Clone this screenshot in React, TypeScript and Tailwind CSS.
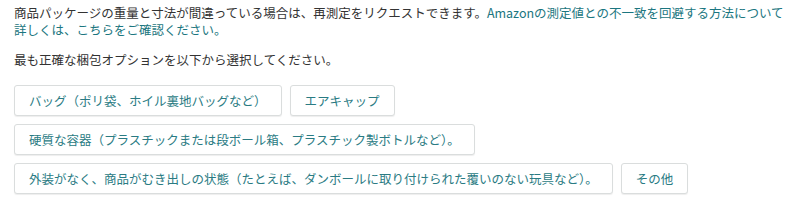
const options = [
  ['バッグ（ポリ袋、ホイル裏地バッグなど）', 'エアキャップ'],
  ['硬質な容器（プラスチックまたは段ボール箱、プラスチック製ボトルなど）。'],
  ['外装がなく、商品がむき出しの状態（たとえば、ダンボールに取り付けられた覆いのない玩具など）。', 'その他'],
]

export default function App() {
  return (
    <div
      className="w-[799px] h-[207px] bg-white px-[14px] pt-[4px] text-[12.5px] leading-[17px] text-[#333]"
      style={{ fontFamily: '"Noto Sans CJK JP", "Noto Sans", sans-serif' }}
    >
      <p>
        商品パッケージの重量と寸法が間違っている場合は、再測定をリクエストできます。
        <a href="#" className="text-[#1b7680]">
          Amazonの測定値との不一致を回避する方法について詳しくは、こちらをご確認ください。
        </a>
      </p>

      <p className="mt-[13px]">最も正確な梱包オプションを以下から選択してください。</p>

      <div className="mt-[17px] flex flex-col gap-[8px]">
        {options.map((row, i) => (
          <div key={i} className="flex gap-[8px]">
            {row.map(label => (
              <button
                key={label}
                type="button"
                className="h-[31px] px-[14px] bg-white border border-[#dadddd] rounded-[3px] shadow-[0_1px_1px_rgba(0,0,0,0.07)] text-[#2a7b83] whitespace-nowrap"
              >
                {label}
              </button>
            ))}
          </div>
        ))}
      </div>
    </div>
  )
}
